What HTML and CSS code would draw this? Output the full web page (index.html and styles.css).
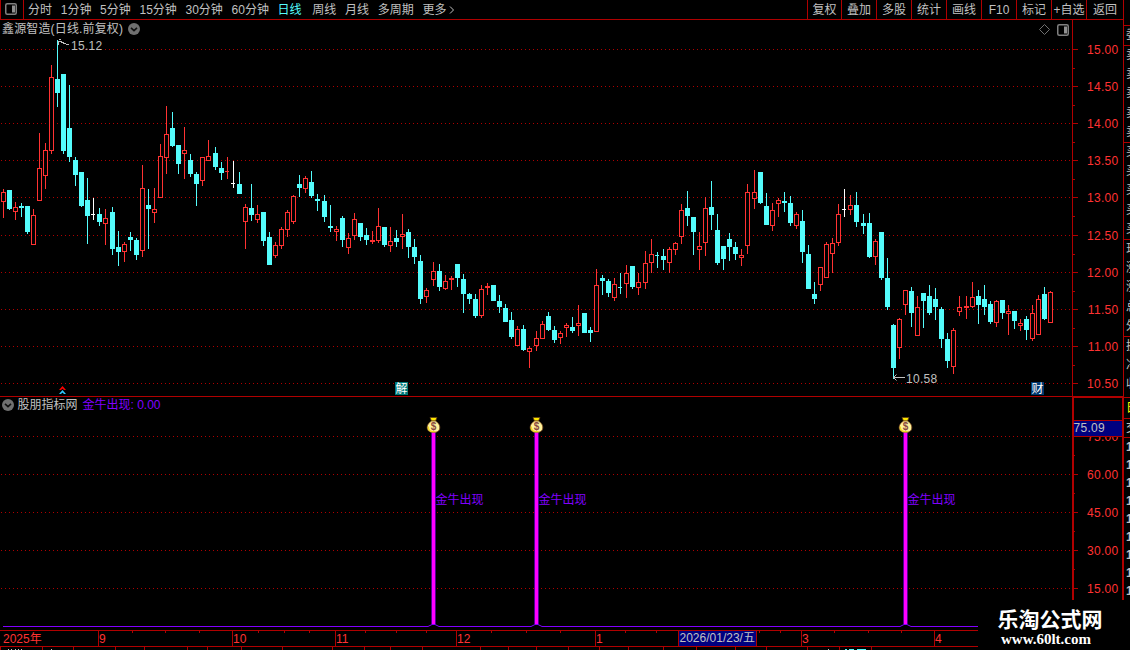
FILE: index.html
```html
<!DOCTYPE html>
<html lang="zh-CN">
<head>
    <meta charset="UTF-8">
    <title>鑫源智造 日线</title>
    <link rel="stylesheet" href="styles.css">
</head>
<body>
    <div class="page">
        <div class="main">
            <div class="toolbar">
                <div class="layout-btn">
                    <svg width="12" height="12" viewBox="0 0 12 12"><rect x="0.75" y="0.75" width="10.5" height="10.5" rx="1.5" class="icon-frame"/><rect x="7" y="2.5" width="3" height="7" class="icon-fill"/></svg>
                </div>
                <div class="periods">
                    <span>分时</span>
                    <span>1分钟</span>
                    <span>5分钟</span>
                    <span>15分钟</span>
                    <span>30分钟</span>
                    <span>60分钟</span>
                    <span class="active">日线</span>
                    <span>周线</span>
                    <span>月线</span>
                    <span>多周期</span>
                    <span class="more">更多<svg width="6" height="8" viewBox="0 0 6 8"><path d="M1 0.5L4.5 4L1 7.5"/></svg></span>
                </div>
                <div class="tools">
                    <span>复权</span><span>叠加</span><span>多股</span><span>统计</span><span>画线</span><span>F10</span><span>标记</span><span>+自选</span><span>返回</span>
                </div>
            </div>

            <div class="kline">
                <div class="title">
                    <span>鑫源智造(日线.前复权)</span>
                    <svg width="12" height="12" viewBox="0 0 12 12"><circle cx="6" cy="6" r="6" class="icon-disc"/><path d="M3 4.8L6 7.6L9 4.8" class="icon-chevron"/></svg>
                </div>
                <div class="corner">
                    <svg width="12" height="12" viewBox="0 0 12 12"><path d="M6.5 0.5L11.5 5.5L6.5 10.5L1.5 5.5Z" class="icon-diamond"/></svg>
                    <svg width="12" height="12" viewBox="0 0 12 12"><rect x="0.75" y="0.75" width="10.5" height="10.5" rx="1.5" class="icon-frame"/><rect x="7" y="2.5" width="3" height="7" class="icon-fill"/></svg>
                </div>
                <svg id="klineChart" width="1072" height="376" viewBox="0 20 1072 376"></svg>
                <svg id="priceAxis" class="price-axis" width="50" height="376" viewBox="1073 20 50 376"></svg>
            </div>

            <div class="indicator">
                <div class="legend">
                    <svg width="12" height="12" viewBox="0 0 12 12"><circle cx="6" cy="6" r="6" class="icon-disc"/><path d="M3 4.8L6 7.6L9 4.8" class="icon-chevron"/></svg>
                    <span class="name">股朋指标网</span>
                    <span class="value">金牛出现: 0.00</span>
                </div>
                <svg id="signalChart" width="1072" height="233" viewBox="0 397 1072 233"></svg>
                <svg id="signalAxis" width="51" height="233" viewBox="1072 397 51 233"></svg>
            </div>

            <svg id="timeAxis" width="1123" height="20" viewBox="0 630 1123 20"></svg>
        </div>

        <div class="side">
            <div class="side-head">委</div>
            <div class="side-group"><i>卖</i><i>卖</i><i>卖</i><i>卖</i><i>卖</i></div>
            <div class="side-group"><i>买</i><i>买</i><i>买</i><i>买</i><i>买</i></div>
            <div class="side-group"><i>现</i><i>涨</i><i>涨</i><i>总</i><i>外</i></div>
            <div class="side-group short"><i>换</i><i>净</i><i>收</i></div>
            <div class="side-tab">日</div>
            <div class="side-sub">交</div>
            <div class="side-list"><i>1</i><i>1</i><i>1</i><i>1</i><i>1</i><i>1</i><i>1</i><i>1</i><i>1</i></div>
        </div>

        <div class="watermark">
            <div class="site">乐淘公式网</div>
            <div class="url">www.60lt.com</div>
        </div>
    </div>
    <script src="chart.js"></script>
</body>
</html>
```
FILE: styles.css
```css
body {
    margin: 0;
    background: #000;
    color: #c0c0c0;
    font-family: "Liberation Sans", "Noto Sans CJK SC", sans-serif;
    font-size: 12px;
    overflow: hidden;
}
svg {
    display: block;
    flex: none;
}
i {
    font-style: normal;
}
.page {
    position: relative;
    display: grid;
    grid-template-columns: 1123px 7px;
    width: 1130px;
    height: 650px;
    overflow: hidden;
}

/* toolbar */
.toolbar {
    display: flex;
    height: 19px;
    line-height: 20px;
    border-bottom: 1px solid #b00000;
    white-space: nowrap;
}
.layout-btn {
    width: 18px;
    padding: 3px 0 0 4px;
    border-left: 1px solid #b00000;
    border-right: 1px solid #b00000;
    height: 16px;
}
.periods {
    display: flex;
    gap: 8.7px;
    padding-left: 4px;
    flex: 1;
}
.periods .active {
    color: #54fcfc;
    margin-right: 2px;
}
.periods .more {
    display: flex;
    align-items: center;
    gap: 3px;
    height: 19px;
}
.more path {
    fill: none;
    stroke: #c0c0c0;
}
.tools {
    display: grid;
    grid-template-columns: 34px 35px 35px 35px 35px 35px 35px 35px 37px;
    height: 19px;
}
.tools span {
    border-left: 1px solid #b00000;
    text-align: center;
    overflow: hidden;
}

/* icons */
.icon-frame {
    fill: none;
    stroke: #808080;
    stroke-width: 1.5;
}
.icon-fill {
    fill: #909090;
}
.icon-disc {
    fill: #707070;
}
.icon-chevron {
    fill: none;
    stroke: #101010;
    stroke-width: 1.6;
}
.icon-diamond {
    fill: none;
    stroke: #707070;
}

/* k line */
.kline {
    position: relative;
    display: flex;
    height: 376px;
    border-bottom: 1px solid #b00000;
}
.title {
    position: absolute;
    left: 2px;
    top: 0;
    display: flex;
    align-items: center;
    gap: 5px;
    height: 18px;
    line-height: 16px;
    letter-spacing: 0.15px;
}
.corner {
    position: absolute;
    left: 1038px;
    top: 4px;
    display: flex;
    gap: 7px;
}
.price-axis {
    border-left: 1px solid #b00000;
}
.axis-text {
    fill: #ff3232;
}
.price {
    letter-spacing: 0.3px;
}
.note {
    fill: #c0c0c0;
}

/* indicator */
.indicator {
    position: relative;
    display: flex;
    height: 233px;
}
.legend {
    position: absolute;
    left: 2px;
    top: 0;
    display: flex;
    align-items: center;
    height: 16px;
    line-height: 16px;
}
.legend .name {
    margin-left: 3.5px;
    margin-right: 5px;
}
.legend .value, .signal-text {
    color: #8000ff;
    fill: #8000ff;
}

/* quote panel on the right edge */
.side {
    border-left: 1px solid #b00000;
    padding-left: 2px;
    width: 4px;
    overflow: hidden;
}
.side > div {
    width: 12px;
    margin-left: -2px;
    padding-left: 2px;
    border-bottom: 1px solid #b00000;
}
.side-head {
    height: 19px;
    line-height: 19px;
    margin-top: 25px;
    border-top: 1px solid #b00000;
}
.side i {
    display: block;
}
.side-group {
    height: 96px;
}
.side-group i {
    height: 19.2px;
    line-height: 19px;
}
.side-group.short {
    height: 60px;
}
.side-tab {
    height: 20px;
    line-height: 20px;
    color: #ffff00;
}
.side-sub {
    height: 18px;
    line-height: 18px;
}
.side .side-list {
    height: 163px;
    border-bottom: none;
}
.side-list i {
    height: 18px;
    line-height: 19px;
    font-weight: bold;
}

/* watermark */
.watermark {
    position: absolute;
    right: 0;
    bottom: 0;
    width: 152px;
    height: 50px;
    background: #000;
    color: #fff;
    font-weight: bold;
}
.watermark .site {
    margin: 6px 0 0 19.5px;
    font: bold 21px/24px "Noto Sans CJK SC", sans-serif;
}
.watermark .url {
    margin: 1px 0 0 23px;
    font: bold 15px/16px "Liberation Serif", serif;
}
```
FILE: chart.js
```javascript
const RED = '#ff3232';
const CYAN = '#54fcfc';
const LINE = '#b00000';

// x, high, body top, body bottom, low, type (r = up, c = down, w = flat)
const candles = `
3 189 192 202 218 r;9 190 190 209 210 c;15 202 207 212 220 r;21 203 206 208 217 c;27 206 206 232 234 c;33 209 215 245 245 r;
39 133 168 201 201 r;45 143 150 176 189 r;51 65 77 151 154 r;57 40 79 93 107 c;63 74 74 151 154 c;69 85 128 157 162 c;
75 157 160 175 186 c;81 172 172 206 207 c;87 178 200 216 244 c;93 198 214 215 220 w;99 208 214 222 226 c;105 209 218 224 245 r;
112 207 212 249 255 c;118 231 247 252 266 c;124 242 244 252 262 r;130 232 237 240 251 c;136 238 240 255 260 c;142 165 188 251 257 r;
148 189 205 209 249 c;154 188 209 213 223 r;160 144 156 198 198 r;166 106 134 158 174 r;172 112 128 146 147 c;178 145 145 164 174 c;
184 127 150 154 179 r;190 154 160 174 177 c;196 172 174 184 206 c;202 157 157 181 186 r;208 140 156 161 161 r;215 147 153 167 170 c;
221 162 168 173 180 c;227 157 171 172 179 r;233 161 183 184 188 w;239 172 184 194 194 c;245 204 207 222 249 r;251 184 208 215 221 c;
257 205 214 220 223 r;263 212 212 241 246 c;269 232 237 265 265 c;275 242 245 256 258 r;281 227 229 246 249 r;287 210 212 230 237 r;
293 195 196 222 224 r;299 175 184 188 197 c;305 176 178 189 193 r;311 171 182 196 198 c;317 194 199 201 211 c;324 195 201 217 222 c;
330 205 226 228 232 c;336 226 229 232 241 r;342 216 218 240 247 c;348 233 238 248 254 r;354 213 219 236 240 r;360 223 223 237 241 c;
366 228 235 240 245 c;372 231 240 242 244 r;378 208 226 241 243 r;384 227 227 245 247 c;390 227 241 246 252 r;396 230 238 242 247 c;
402 214 234 237 249 r;408 229 232 247 258 c;414 239 247 257 264 c;420 255 261 299 304 c;426 288 290 297 303 r;433 262 271 280 286 r;
439 264 271 287 291 c;445 275 281 289 290 r;451 276 278 280 290 r;457 264 264 278 287 c;463 274 279 294 313 c;469 293 294 299 304 c;
475 294 299 316 318 c;481 285 289 316 318 r;487 283 286 288 295 r;493 285 285 301 301 c;499 295 301 307 313 c;505 304 308 322 322 c;
511 312 320 337 339 c;517 326 329 346 346 r;523 325 329 350 351 c;529 346 348 352 368 r;536 331 338 346 351 r;542 321 324 339 339 r;
548 312 316 330 331 c;554 326 330 340 343 c;560 331 333 338 344 r;566 323 325 328 337 r;572 317 327 331 333 c;578 305 323 326 336 r;
584 313 313 333 333 c;590 327 330 333 342 c;596 269 285 332 332 r;602 275 278 281 295 c;608 279 281 293 297 c;614 278 284 298 301 r;
620 273 287 288 294 c;626 265 273 284 298 r;632 266 266 287 289 c;638 273 282 288 295 r;645 251 263 283 289 r;651 239 254 263 273 r;
657 252 255 256 268 c;663 249 256 260 270 c;669 247 249 263 273 r;675 242 243 250 255 r;681 204 210 237 244 r;687 191 208 216 226 c;
693 217 217 232 255 c;699 232 246 250 270 r;705 197 208 243 256 r;711 181 207 215 230 c;717 214 230 263 265 c;723 246 246 259 270 c;
729 233 239 247 261 c;735 242 247 254 260 c;741 249 255 258 266 r;747 184 192 246 254 r;754 170 192 199 209 r;760 172 172 203 204 c;
766 193 206 225 225 c;772 203 210 226 231 r;778 198 200 204 217 r;784 192 201 203 212 c;790 196 203 223 226 c;796 212 214 226 229 r;
802 210 221 252 263 c;808 245 254 289 289 c;814 282 294 299 304 c;820 267 267 285 291 r;826 242 244 278 278 r;832 238 243 254 273 r;
838 204 214 243 246 r;844 189 209 210 217 w;850 195 205 210 215 r;856 192 205 222 227 c;863 214 223 226 234 c;869 213 223 257 258 c;
875 239 241 257 265 r;881 232 232 278 280 c;887 258 278 307 310 c;893 324 325 368 379 c;899 318 319 348 359 r;905 290 290 305 315 r;
911 287 291 313 327 c;917 296 307 336 336 r;923 293 293 301 328 c;929 285 296 313 315 c;935 288 299 307 320 c;941 307 309 339 348 c;
947 333 339 361 368 c;953 328 330 367 374 r;959 296 307 312 316 r;966 296 306 308 319 r;972 282 297 307 308 r;978 290 296 305 324 c;
984 285 299 307 315 c;990 301 304 322 324 c;996 300 301 323 327 r;1002 300 300 313 319 c;1008 305 311 314 335 r;1014 311 311 321 329 c;
1020 319 323 326 331 r;1026 316 319 330 340 c;1032 305 313 339 341 r;1038 295 299 335 335 r;1044 287 294 319 320 c;1050 291 292 323 323 r`;

function rect(x, y, w, h, fill) {
    return `<rect x="${x}" y="${y}" width="${w}" height="${h}" fill="${fill}"/>`;
}

function text(x, y, str, cls, anchor) {
    return `<text x="${x}" y="${y}" class="${cls}" text-anchor="${anchor || 'start'}">${str}</text>`;
}

function gridLine(y) {
    return `<path d="M1 ${y + 0.5}H1072" stroke="${LINE}" stroke-dasharray="1 3"/>`;
}

function candle(row) {
    const parts = row.trim().split(' ');
    const [x, high, top, bottom, low] = parts.map(Number);
    const type = parts[5];
    const color = type === 'r' ? RED : type === 'c' ? CYAN : '#ffffff';
    // open == close
    if (bottom - top === 1) {
        return rect(x, high, 1, low - high, color) + rect(x - 2, top, 4, 1, color);
    }
    let html = rect(x, high, 1, top - high, color) + rect(x, bottom, 1, low - bottom, color);
    if (type === 'r' && bottom - top > 2) {
        html += `<rect x="${x - 1.5}" y="${top + 0.5}" width="4" height="${bottom - top - 1}" fill="#000" stroke="${RED}"/>`;
    } else {
        html += rect(x - 2, top, 5, bottom - top, color);
    }
    return html;
}

function badge(x, str, bg) {
    return rect(x, 382, 13, 13, bg) + `<text x="${x + 0.5}" y="393" fill="#fff">${str}</text>`;
}

function drawKline() {
    const ys = [49, 86, 123, 160, 197, 235, 272, 309, 346, 383];
    let html = ys.map(gridLine).join('');
    html += candles.split(';').map(candle).join('');
    html += '<path d="M59 39.5H61M58 41.5H62M58.5 41V45M61 42.5H64M63 43.5H66M66 44.5H69" stroke="#c0c0c0" fill="none"/>';
    html += text(71, 50, '15.12', 'note price');
    html += '<path d="M893 377.5H905M896.5 374.5L893.5 377.5L896.5 380.5" stroke="#c0c0c0" fill="none"/>';
    html += text(906, 383, '10.58', 'note price');
    html += '<path d="M59 390L62.5 386L66 390H64L62.5 388.5L61 390Z" fill="#ff0000"/>';
    html += '<path d="M59 394L62.5 390L66 394H64L62.5 392.5L61 394Z" fill="#30c8ff"/>';
    html += badge(395, '解', '#007878') + badge(1031, '财', '#003870');
    document.getElementById('klineChart').innerHTML = html;

    let axis = '';
    ys.forEach((y, i) => {
        axis += rect(1073, y, 5, 1, LINE);
        axis += text(1118.5, y + 5, (15 - i * 0.5).toFixed(2), 'axis-text price', 'end');
        if (i < 9) axis += rect(1073, y + 19, 2, 1, LINE);
    });
    document.getElementById('priceAxis').innerHTML = axis;
}

function moneyBag(x) {
    return `<g transform="translate(${x - 6.5} 417)">
        <path d="M3.5 0.5H10.5L9 4H5Z" fill="#ffe800" stroke="#604010" stroke-width="0.8"/>
        <path d="M5 4H9C12 6 13.5 8 13.3 11C13 14 11 15.4 7 15.4C3 15.4 1 14 0.7 11C0.5 8 2 6 5 4Z" fill="#fff29a" stroke="#7a4a20" stroke-width="0.8"/>
        <path d="M1.8 9.5C1.5 12.5 3 14.5 6 14.6H9" stroke="#f0d820" stroke-width="1.4" fill="none"/>
        <text x="7" y="13.2" font-size="10" font-weight="bold" fill="#8a4a40" text-anchor="middle">$</text>
    </g>`;
}

function drawSignal() {
    const ys = [436, 474, 512, 550, 588];
    const signals = [433, 536, 905];
    let html = ys.map(gridLine).join('');
    let d = 'M3 626.5';
    signals.forEach(x => {
        d += `H${x - 5}L${x - 1} 624.5H${x + 2}L${x + 6} 626.5`;
        html += rect(x - 2, 432, 5, 192, '#500090') + rect(x - 1, 432, 3, 192, '#ff00ff');
        html += moneyBag(x) + text(x + 2.5, 504, '金牛出现', 'signal-text');
    });
    html += `<path d="${d}H978" stroke="#8000ff" fill="none"/>`;
    document.getElementById('signalChart').innerHTML = html;

    let axis = rect(1072, 397, 2, 203, LINE) + rect(1122, 397, 2, 203, LINE) + rect(1072, 397, 51, 1, LINE);
    ys.forEach((y, i) => {
        axis += rect(1074, y, 4, 1, LINE);
        axis += text(1118.5, y + 5, (75 - i * 15).toFixed(2), 'axis-text price', 'end');
        if (i < 4) axis += rect(1074, y + 19, 1, 1, LINE);
    });
    axis += rect(1074, 420, 48, 17, LINE) + rect(1074, 421, 48, 15, '#000080') + text(1073.5, 432, '75.09', 'note price');
    document.getElementById('signalAxis').innerHTML = axis;
}

function drawTime() {
    const months = [[98, '9'], [232, '10'], [335, '11'], [456, '12'], [595, '1'], [801, '3'], [934, '4']];
    const ticks = [132, 165, 199, 258, 284, 309, 365, 396, 426, 491, 526, 560, 625, 656, 759, 780, 834, 868, 901];
    const lower = [0, 42, 73, 115, 144, 187, 207, 241, 282, 332, 364, 390, 422, 480, 508, 536, 568, 599, 628, 663, 696, 735, 766, 807, 839, 871];
    let html = rect(0, 630, 978, 1, LINE) + rect(0, 646, 978, 1, LINE);
    html += text(3, 643, '2025年', 'axis-text');
    months.forEach(([x, label]) => {
        html += rect(x, 631, 1, 15, LINE) + text(x + 1, 643, label, 'axis-text');
    });
    ticks.forEach(x => html += rect(x, 631, 1, 2, LINE));
    lower.forEach(x => html += rect(x, 647, 1, 3, LINE));
    html += rect(678, 631, 79, 15, LINE) + rect(679, 631, 77, 15, '#000080') + text(679.5, 642, '2026/01/23/五', 'note');
    [8, 11, 15, 18, 21, 51, 828].forEach(x => html += rect(x, 649, 1, 1, '#c0c0c0'));
    html += rect(845, 649, 2, 1, CYAN) + rect(849, 649, 5, 1, CYAN) + rect(857, 649, 9, 1, CYAN);
    document.getElementById('timeAxis').innerHTML = html;
}

drawKline();
drawSignal();
drawTime();
```
